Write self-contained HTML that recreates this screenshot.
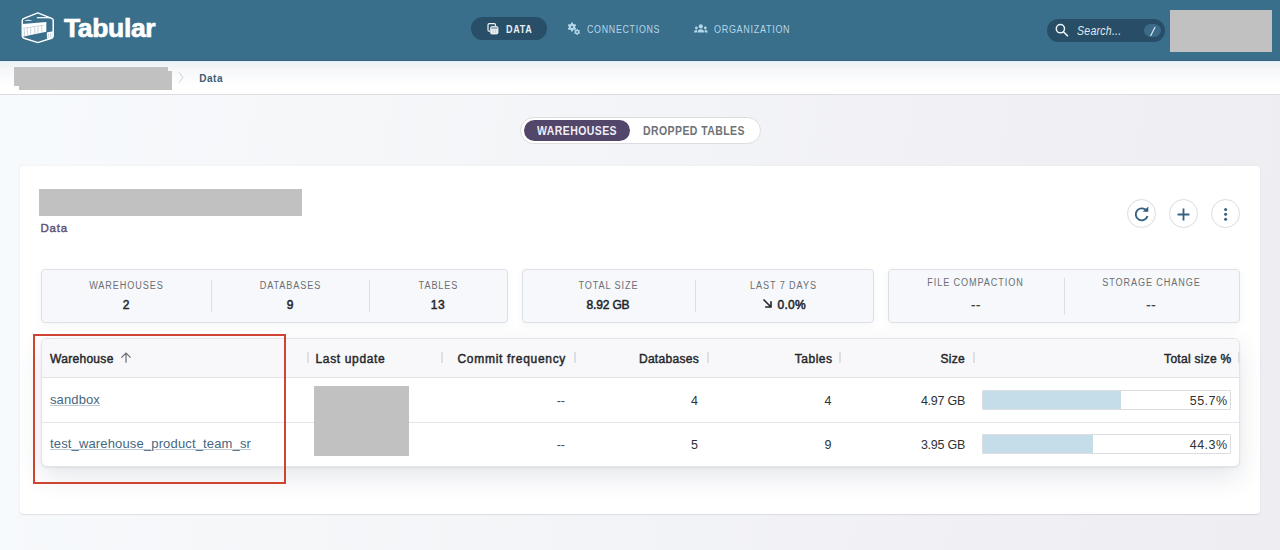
<!DOCTYPE html>
<html><head><meta charset="utf-8">
<style>
*{box-sizing:border-box;margin:0;padding:0}
html,body{width:1280px;height:550px;overflow:hidden}
body{font-family:"Liberation Sans",sans-serif;background:#f1f2f5;position:relative;color:#222}
.abs{position:absolute}
#hdr{left:0;top:0;width:1280px;height:61px;background:#396f8b;border-bottom:1px solid #3a6276}
#crumb{left:0;top:61px;width:1280px;height:34px;background:linear-gradient(#e0f0f9 0px,#eef3f6 3px,#f5f7f9 8px,#fff 24px);border-bottom:1px solid #dcdde1}
#main{left:0;top:95px;width:1280px;height:455px;background:linear-gradient(98deg,#f7fafc 0%,#f3f4f7 50%,#eeedf2 100%)}
.gblock{background:#c1c1c1}
.t{position:absolute;white-space:nowrap;line-height:1}
.c{text-align:center}
.r{text-align:right}
.lbl{font-size:10px;color:#6a6e73;letter-spacing:1px !important;padding-left:1px;transform:scaleX(0.91);transform-origin:50% 0}
.val{font-size:12px;font-weight:normal;color:#23262a;-webkit-text-stroke:0.5px #23262a}
.sbox{background:#f6f8fb;border:1px solid #dde1e6;border-radius:4px;box-shadow:0 2px 8px rgba(40,60,90,0.05)}
.sdiv{width:1px;background:#dcdfe3}
.th{font-size:12px;font-weight:normal;color:#25282c;-webkit-text-stroke:0.45px #25282c}
.hd{width:2px;height:11px;background:#dedfe3;top:352px}
.td{font-size:12.5px;color:#2e3236}
.lnk{font-size:13px;color:#45677f;text-decoration:underline;text-decoration-color:#bfc9d1;text-underline-offset:1px}
.ib{width:29px;height:29px;border-radius:50%;border:1px solid #d9dcdf;top:199.2px;background:#fff}
.bar{left:982px;width:249px;height:20px;border:1px solid #dcdde0;background:#fff;border-radius:1px}
.bar i{position:absolute;left:0;top:0;bottom:0;background:#c5dce9}
</style></head><body>
<div id="hdr" class="abs">
  <!-- logo -->
  <svg class="abs" style="left:18px;top:9px" width="40" height="38" viewBox="0 0 40 38">
    <path d="M19.8 3.9 L33.6 9.4 Q35.2 10 35.2 11.6 L35.2 27 Q35.2 28.6 33.6 29.2 L20.4 33.4 Q19.8 33.6 19.2 33.4 L6 29.2 Q4.3 28.6 4.3 27 L4.3 11.6 Q4.3 10 6 9.4 Z" fill="none" stroke="#fff" stroke-width="1.5" stroke-linejoin="round"/>
    <path d="M4.6 15 L28.3 13 L28.3 22.8 L4.6 27.8 Z" fill="#fff"/>
    <path d="M6.2 19.6 L6.6 27 M9.2 19.2 L9.5 26.4 M12.8 19 L12.6 25.7 M16.6 18.4 L17 25 M20.2 18 L19.8 24.3 M23.6 16.8 L23.8 23.6 M5 19.4 L25.5 16.2" stroke="#8aaabb" stroke-width="0.5" fill="none"/>
    <path d="M28.8 23.5 L34.8 22.3 L34.8 27.6 Q34 29 29 30.6 Z" fill="#fff"/>
    <path d="M30.6 24.6 L30 29.6 M33 24 L32.2 28.6" stroke="#8aaabb" stroke-width="0.5" fill="none"/>
    <path d="M6.2 11.8 Q10 9.6 14.5 11.8 Z" fill="#fff"/>
    <path d="M18.8 8.7 L32.3 8.7" stroke="#fff" stroke-width="1.2"/>
  </svg>
  <div class="t" style="left:64px;top:15px;font-size:26.5px;font-weight:bold;letter-spacing:-0.35px;color:#fff;-webkit-text-stroke:0.7px #fff">Tabular</div>
  <!-- nav -->
  <div class="abs" style="left:471px;top:17px;width:76px;height:23px;border-radius:12px;background:#294f68"></div>
  <svg class="abs" style="left:486px;top:22px" width="14" height="14" viewBox="0 0 14 14">
    <rect x="2" y="1.7" width="7.5" height="7.5" rx="1.3" fill="none" stroke="#eef3f6" stroke-width="1.2"/>
    <rect x="4" y="4" width="8.4" height="8.2" rx="1.5" fill="#294f68"/>
    <rect x="4.6" y="4.6" width="7.4" height="7.4" rx="1.2" fill="#e9eff3" stroke="#eef3f6" stroke-width="0.8"/>
    <path d="M5.2 6 H11.4" stroke="#294f68" stroke-width="0.8"/>
    <path d="M7 7.5 V11 M9.6 7.5 V11" stroke="#9fb2bf" stroke-width="0.6"/>
  </svg>
  <div class="t" style="left:505.8px;top:24.6px;font-size:10px;font-weight:bold;letter-spacing:0.8px;color:#e9eff3;transform:scaleX(0.9);transform-origin:0 0">DATA</div>
  <svg class="abs" style="left:566px;top:21px" width="16" height="16" viewBox="0 0 16 16">
    <g fill="#b4d6ea">
      <circle cx="6" cy="6" r="3.2"/>
      <rect x="5" y="1.6" width="2" height="8.8" rx="0.6"/>
      <rect x="5" y="1.6" width="2" height="8.8" rx="0.6" transform="rotate(60 6 6)"/>
      <rect x="5" y="1.6" width="2" height="8.8" rx="0.6" transform="rotate(120 6 6)"/>
      <circle cx="11.1" cy="10.9" r="2.2"/>
      <rect x="10.4" y="7.9" width="1.4" height="6" rx="0.4"/>
      <rect x="10.4" y="7.9" width="1.4" height="6" rx="0.4" transform="rotate(60 11.1 10.9)"/>
      <rect x="10.4" y="7.9" width="1.4" height="6" rx="0.4" transform="rotate(120 11.1 10.9)"/>
    </g>
    <circle cx="6" cy="6" r="1.1" fill="#396f8b"/>
    <circle cx="11.1" cy="10.9" r="0.9" fill="#396f8b"/>
  </svg>
  <div class="t" style="left:586.6px;top:24.6px;font-size:10px;letter-spacing:0.8px;color:#b4d6ea;transform:scaleX(0.885);transform-origin:0 0">CONNECTIONS</div>
  <svg class="abs" style="left:693px;top:23px" width="16" height="11" viewBox="0 0 16 11">
    <g fill="#b4d6ea">
      <circle cx="7.8" cy="3.4" r="2.1"/>
      <path d="M4.6 9.4 Q4.6 6.2 7.8 6.2 Q11 6.2 11 9.4 Z"/>
      <circle cx="3.4" cy="5" r="1.4"/>
      <path d="M0.9 9.4 Q0.9 7.1 3.2 7.1 Q4.2 7.1 4.2 7.6 L4 9.4 Z"/>
      <circle cx="12.3" cy="5" r="1.4"/>
      <path d="M14.8 9.4 Q14.8 7.1 12.5 7.1 Q11.5 7.1 11.5 7.6 L11.7 9.4 Z"/>
    </g>
  </svg>
  <div class="t" style="left:713.6px;top:24.6px;font-size:10px;letter-spacing:0.8px;color:#b4d6ea;transform:scaleX(0.898);transform-origin:0 0">ORGANIZATION</div>
  <!-- search -->
  <div class="abs" style="left:1047px;top:19px;width:118px;height:22.5px;border-radius:11.5px;background:#284e67"></div>
  <svg class="abs" style="left:1053px;top:22px" width="18" height="17" viewBox="0 0 18 17">
    <circle cx="7.4" cy="6.7" r="4.1" fill="none" stroke="#eef3f6" stroke-width="1.5"/>
    <path d="M10.3 9.7 L14.5 13.8" stroke="#eef3f6" stroke-width="1.6" stroke-linecap="round"/>
  </svg>
  <div class="t" style="left:1076.8px;top:25px;font-size:12px;font-style:italic;letter-spacing:0.3px;color:#e2eaf0;transform:scaleX(0.876);transform-origin:0 0">Search...</div>
  <div class="abs" style="left:1143.5px;top:23.6px;width:17px;height:13.5px;border-radius:7px;background:#3c6a89"></div>
  <svg class="abs" style="left:1143.5px;top:23.6px" width="17" height="14" viewBox="0 0 17 14">
    <path d="M11 3.2 L6.8 11.6" stroke="#e6eef3" stroke-width="1.1" stroke-linecap="round"/>
  </svg>
  <div class="abs gblock" style="left:1170px;top:10px;width:102px;height:42px"></div>
</div>
<div id="crumb" class="abs">
  <div class="abs gblock" style="left:14px;top:6px;width:154px;height:19px"></div>
  <div class="abs gblock" style="left:19px;top:10px;width:153px;height:19px"></div>
  <svg class="abs" style="left:177px;top:10px" width="8" height="13" viewBox="0 0 8 13">
    <path d="M2 1.2 L6 6.4 L2 11.6" fill="none" stroke="#c9ccd0" stroke-width="0.9"/>
  </svg>
  <div class="t" style="left:199.3px;top:12.5px;font-size:10px;font-weight:bold;letter-spacing:0.5px;color:#3e5c75">Data</div>
</div>
<div id="main" class="abs"></div>

<!-- toggle -->
<div class="abs" style="left:520px;top:117px;width:241px;height:27px;border-radius:14px;background:#fff;border:1px solid #dcdde1"></div>
<div class="abs" style="left:524px;top:120px;width:106px;height:20.5px;border-radius:10.5px;background:#52466b"></div>
<div class="t" style="left:537px;top:125.2px;font-size:12.2px;font-weight:bold;letter-spacing:0.5px;color:#f1eef5;transform:scaleX(0.86);transform-origin:0 0">WAREHOUSES</div>
<div class="t" style="left:643px;top:125.2px;font-size:12.2px;font-weight:bold;letter-spacing:0.5px;color:#6e7377;transform:scaleX(0.86);transform-origin:0 0">DROPPED TABLES</div>

<!-- card -->
<div class="abs" style="left:20px;top:166px;width:1240px;height:348px;background:#fff;border-radius:4px;box-shadow:0 1px 1px rgba(40,50,80,0.10),0 0 3px rgba(40,50,80,0.05)"></div>
<div class="abs gblock" style="left:38.5px;top:189px;width:263.5px;height:27px"></div>
<div class="t" style="left:40.5px;top:223.2px;font-size:11.5px;letter-spacing:0.75px;color:#5f557b;-webkit-text-stroke:0.45px #5f557b">Data</div>

<!-- icon buttons -->
<div class="abs ib" style="left:1126.5px"></div>
<div class="abs ib" style="left:1169px"></div>
<div class="abs ib" style="left:1211px"></div>
<svg class="abs" style="left:1126.5px;top:199.5px" width="29" height="29" viewBox="0 0 29 29">
  <path d="M19.9 11.3 A6 6 0 1 0 20.5 16" fill="none" stroke="#35607d" stroke-width="1.9"/>
  <path d="M15.6 11.8 L21.3 11.8 L21.3 6.4 Z" fill="#35607d"/>
</svg>
<svg class="abs" style="left:1169px;top:199.5px" width="29" height="29" viewBox="0 0 29 29">
  <path d="M14.5 8.6 V20.4 M8.6 14.5 H20.4" stroke="#35607d" stroke-width="1.8"/>
</svg>
<svg class="abs" style="left:1211px;top:199.5px" width="29" height="29" viewBox="0 0 29 29">
  <circle cx="14.6" cy="9.5" r="1.5" fill="#35607d"/>
  <circle cx="14.6" cy="14.3" r="1.5" fill="#35607d"/>
  <circle cx="14.6" cy="19.3" r="1.5" fill="#35607d"/>
</svg>

<!-- stat boxes -->
<div class="abs sbox" style="left:40.5px;top:269px;width:467px;height:54px"></div>
<div class="abs sdiv" style="left:211px;top:280px;height:32px"></div>
<div class="abs sdiv" style="left:369px;top:280px;height:32px"></div>
<div class="t c lbl" style="left:26px;width:200px;top:281px;letter-spacing:0.07px">WAREHOUSES</div>
<div class="t c lbl" style="left:190px;width:200px;top:281px;letter-spacing:0.31px">DATABASES</div>
<div class="t c lbl" style="left:337.6px;width:200px;top:281px;letter-spacing:0.32px">TABLES</div>
<div class="t c val" style="left:26px;width:200px;top:299.1px">2</div>
<div class="t c val" style="left:190px;width:200px;top:299.1px">9</div>
<div class="t c val" style="left:338px;width:200px;top:299.1px;letter-spacing:0.6px">13</div>

<div class="abs sbox" style="left:521.5px;top:269px;width:352px;height:54px"></div>
<div class="abs sdiv" style="left:694.5px;top:280px;height:32px"></div>
<div class="t c lbl" style="left:507.8px;width:200px;top:281px;letter-spacing:0.33px">TOTAL SIZE</div>
<div class="t c lbl" style="left:683.4px;width:200px;top:281px;letter-spacing:0.33px">LAST 7 DAYS</div>
<div class="t c val" style="left:508px;width:200px;top:299.1px;letter-spacing:-0.15px">8.92 GB</div>
<svg class="abs" style="left:762px;top:298px" width="11" height="11" viewBox="0 0 11 11"><path d="M1.5 1.5 L9 9 M3.2 9 H9 V3.2" fill="none" stroke="#23262a" stroke-width="1.6"/></svg><div class="t val" style="left:777.5px;top:299.1px;letter-spacing:0.3px">0.0%</div>

<div class="abs sbox" style="left:887.5px;top:269px;width:352px;height:54px"></div>
<div class="abs sdiv" style="left:1063.5px;top:277.5px;height:37px"></div>
<div class="t c lbl" style="left:875.4px;width:200px;top:278px;letter-spacing:0.45px">FILE COMPACTION</div>
<div class="t c lbl" style="left:1050.9px;width:200px;top:278px;letter-spacing:0.15px">STORAGE CHANGE</div>
<div class="t c val" style="left:875.7px;width:200px;top:298.3px;font-weight:normal;font-size:13px;letter-spacing:0.6px;padding-left:0.6px;color:#3a3d41;-webkit-text-stroke:0.3px #3a3d41">--</div>
<div class="t c val" style="left:1051px;width:200px;top:298.3px;font-weight:normal;font-size:13px;letter-spacing:0.6px;padding-left:0.6px;color:#3a3d41;-webkit-text-stroke:0.3px #3a3d41">--</div>

<!-- table -->
<div class="abs" style="left:40.5px;top:337.5px;width:1199px;height:129px;background:#fff;border:1px solid #e2e4e8;border-radius:6px;box-shadow:0 1px 2px rgba(40,50,80,0.08),0 10px 26px rgba(40,60,90,0.12);overflow:hidden">
  <div class="abs" style="left:0;top:0;width:1199px;height:39.5px;background:#f8f8fa;border-bottom:1px solid #e1e2e6"></div>
  <div class="abs" style="left:0;top:83px;width:1199px;height:1px;background:#e4e5e8"></div>
</div>
<div class="t th" style="left:50px;top:352.8px;letter-spacing:0.3px">Warehouse</div>
<svg class="abs" style="left:119.2px;top:351.2px" width="14" height="13" viewBox="0 0 14 13">
  <path d="M7 2.2 V11.8 M2.4 6.6 L7 2 L11.6 6.6" fill="none" stroke="#6a6d72" stroke-width="1.2"/>
</svg>
<div class="abs hd" style="left:307px"></div>
<div class="t th" style="left:315.5px;top:352.8px;letter-spacing:0.65px">Last update</div>
<div class="abs hd" style="left:441px"></div>
<div class="t th" style="left:457.5px;top:352.8px;letter-spacing:0.7px">Commit frequency</div>
<div class="abs hd" style="left:573.5px"></div>
<div class="t th r" style="left:599px;width:100px;top:352.8px;letter-spacing:0.3px">Databases</div>
<div class="abs hd" style="left:707px"></div>
<div class="t th r" style="left:732.5px;width:100px;top:352.8px;letter-spacing:0.5px">Tables</div>
<div class="abs hd" style="left:839px"></div>
<div class="t th r" style="left:865px;width:100px;top:352.8px;letter-spacing:0.3px">Size</div>
<div class="abs hd" style="left:973px"></div>
<div class="t th r" style="left:1131.5px;width:100px;top:352.8px;letter-spacing:0.28px">Total size %</div>
<div class="abs hd" style="left:1238px"></div>

<div class="abs gblock" style="left:314.2px;top:386px;width:94.5px;height:70.3px"></div>

<div class="t lnk" style="left:50px;top:393px;letter-spacing:0.12px">sandbox</div>
<div class="t td r" style="left:465px;width:100px;top:395px;color:#4a4d52">--</div>
<div class="t td r" style="left:598px;width:100px;top:395px">4</div>
<div class="t td r" style="left:731.5px;width:100px;top:395px">4</div>
<div class="t td r" style="left:865px;width:100px;top:395px;letter-spacing:-0.25px">4.97 GB</div>
<div class="abs bar" style="top:389.6px"><i style="width:138px"></i></div>
<div class="t td r" style="left:1127.5px;width:100px;top:395px;letter-spacing:0.45px">55.7%</div>

<div class="t lnk" style="left:50px;top:437px;letter-spacing:0.15px">test_warehouse_product_team_sr</div>
<div class="t td r" style="left:465px;width:100px;top:439px;color:#4a4d52">--</div>
<div class="t td r" style="left:598px;width:100px;top:439px">5</div>
<div class="t td r" style="left:731.5px;width:100px;top:439px">9</div>
<div class="t td r" style="left:865px;width:100px;top:439px;letter-spacing:-0.25px">3.95 GB</div>
<div class="abs bar" style="top:433.9px"><i style="width:110px"></i></div>
<div class="t td r" style="left:1127.5px;width:100px;top:439px;letter-spacing:0.45px">44.3%</div>

<!-- red annotation -->
<div class="abs" style="left:33px;top:334px;width:253px;height:150px;border:2px solid #cf4430"></div>
</body></html>
